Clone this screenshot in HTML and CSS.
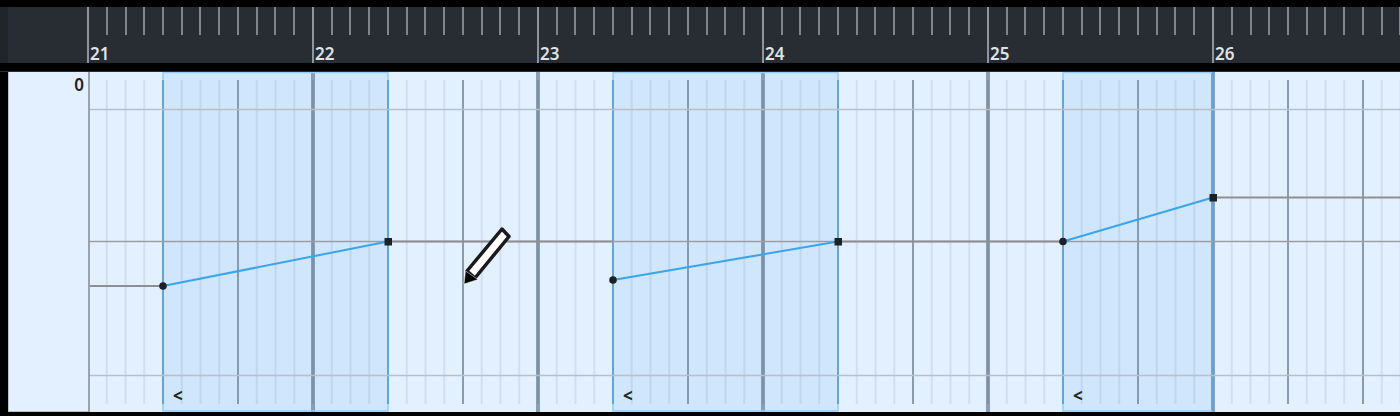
FILE: index.html
```html
<!DOCTYPE html>
<html lang="en">
<head>
  <meta charset="UTF-8">
  <title>Automation lane</title>
  <link rel="stylesheet" href="styles.css">
</head>
<body>

  <div class="ruler">
    <div class="ruler-corner"></div>
    <div class="ruler-bar">21</div>
    <div class="ruler-bar">22</div>
    <div class="ruler-bar">23</div>
    <div class="ruler-bar">24</div>
    <div class="ruler-bar">25</div>
    <div class="ruler-bar">26</div>
  </div>

  <div class="editor">
    <div class="lane-head">0</div>
    <div class="lane">
      <svg class="lane-grid" width="1312" height="340" viewBox="88 72 1312 340">
        <defs>
          <pattern id="minor" x="88" y="80" width="18.75" height="324" patternUnits="userSpaceOnUse">
            <rect x="-0.75" width="1.5" height="324" fill="#7b8fa6" fill-opacity="0.24"/>
            <rect x="18" width="1.5" height="324" fill="#7b8fa6" fill-opacity="0.24"/>
          </pattern>
          <pattern id="beat" x="88" y="80" width="75" height="324" patternUnits="userSpaceOnUse">
            <rect x="-1" width="2" height="324" fill="#7b8fa6" fill-opacity="0.85"/>
            <rect x="74" width="2" height="324" fill="#7b8fa6" fill-opacity="0.85"/>
          </pattern>
          <pattern id="bar" x="88" y="72" width="225" height="340" patternUnits="userSpaceOnUse">
            <rect x="-2" width="4" height="340" fill="#7b8fa6" fill-opacity="0.85"/>
            <rect x="223" width="4" height="340" fill="#7b8fa6" fill-opacity="0.85"/>
          </pattern>
        </defs>

        <g class="regions">
          <rect x="163" y="72" width="225" height="339"/>
          <rect x="613" y="72" width="225" height="339"/>
          <rect x="1063" y="72" width="150" height="339"/>
        </g>

        <rect x="88" y="80" width="1312" height="324" fill="url(#minor)"/>
        <rect x="88" y="80" width="1312" height="324" fill="url(#beat)"/>
        <rect x="90" y="72" width="1310" height="340" fill="url(#bar)"/>

        <g class="region-frames">
          <rect x="163" y="72.5" width="225" height="338.5"/>
          <rect x="613" y="72.5" width="225" height="338.5"/>
          <rect x="1063" y="72.5" width="150" height="338.5"/>
        </g>
        <path class="region-edges" d="M163 80V404M388 80V404M613 80V404M838 80V404M1063 80V404M1213 72V411"/>

        <rect class="lane-edge" x="87" y="72" width="3" height="340"/>
        <path class="hline" d="M90 109.5H1400M90 375.5H1400"/>
        <path class="hline-mid" d="M90 241.5H1400"/>

        <path class="hold" d="M90 286H163M388 241.5H613M838 241.5H1063M1213 197.5H1400"/>
        <path class="ramp" d="M163 286L388 241.5M613 280L838 241.5M1063 241.5L1213 197.5"/>

        <circle class="node" cx="163" cy="286" r="3.8"/>
        <circle class="node" cx="613" cy="280" r="3.8"/>
        <circle class="node" cx="1063" cy="241.5" r="3.8"/>
        <rect class="node" x="384.5" y="238" width="7.5" height="7.5"/>
        <rect class="node" x="834.5" y="238" width="7.5" height="7.5"/>
        <rect class="node" x="1209.5" y="194" width="7.5" height="7.5"/>

        <text class="marker" x="173" y="402">&lt;</text>
        <text class="marker" x="623" y="402">&lt;</text>
        <text class="marker" x="1073" y="402">&lt;</text>

        <g class="pencil">
          <path class="pencil-body" d="M502 229L509 236.5L475 278L467 271Z"/>
          <path class="pencil-tip" d="M464 284L465.5 271L478 279.5Z"/>
        </g>
      </svg>
    </div>
  </div>

</body>
</html>
```

FILE: styles.css
```css
html, body {
  margin: 0;
  height: 416px;
  overflow: hidden;
  background-color: #000;
  font-family: "Noto Sans", sans-serif;
}

.ruler {
  display: flex;
  height: 56px;
  margin-top: 7px;
  background-color: #272d33;
}

.ruler-corner {
  width: 87px;
  flex-shrink: 0;
  background: linear-gradient(90deg, #20252a 8px, #272d33 8px);
}

.ruler-bar {
  width: 225px;
  flex-shrink: 0;
  box-sizing: border-box;
  padding: 36px 0 0 1px;
  border-left: 2px solid #8f959a;
  font-size: 17px;
  font-weight: 600;
  line-height: 21px;
  color: #dfe2e4;
  background-image: repeating-linear-gradient(90deg, transparent 0 16.75px, #7f8589 16.75px 18.75px);
  background-size: 100% 28px;
  background-repeat: no-repeat;
}

.editor {
  display: flex;
  height: 340px;
  margin-top: 8px;
  padding-left: 8px;
  border-top: 1px solid #22303c;
}

.lane-head {
  width: 80px;
  flex-shrink: 0;
  padding: 2px 4px 0 0;
  box-sizing: border-box;
  text-align: right;
  font-size: 17px;
  font-weight: 600;
  line-height: 22px;
  color: #222;
  background-color: #e3f0ff;
  border-left: 1px solid #b9c2cb;
  border-bottom: 1px solid #b9c2cb;
}

.lane {
  flex: 1;
  background-color: #e3f0ff;
}

.lane-grid {
  display: block;
}

.regions rect {
  fill: #cfe6fd;
}

.region-frames rect {
  fill: none;
  stroke: #93cdf6;
  stroke-width: 1.5;
}

.region-edges {
  fill: none;
  stroke: #62a6d9;
  stroke-width: 2;
}

.lane-edge {
  fill: #9aa3ad;
}

.hline {
  fill: none;
  stroke: #b9bfc6;
  stroke-width: 1.5;
}

.hline-mid {
  fill: none;
  stroke: #9b9fa4;
  stroke-width: 1.5;
}

.hold {
  fill: none;
  stroke: #8d8f92;
  stroke-width: 2;
}

.ramp {
  fill: none;
  stroke: #39a5ea;
  stroke-width: 2;
}

.node {
  fill: #1c2126;
}

.marker {
  font-family: "Noto Sans", sans-serif;
  font-size: 17px;
  font-weight: 700;
  fill: #222;
}

.pencil-body {
  fill: #fff;
  stroke: #1a1a1a;
  stroke-width: 3.5;
  stroke-linejoin: round;
}

.pencil-tip {
  fill: #000;
  stroke: #fff;
  stroke-width: 0.5;
}
```
